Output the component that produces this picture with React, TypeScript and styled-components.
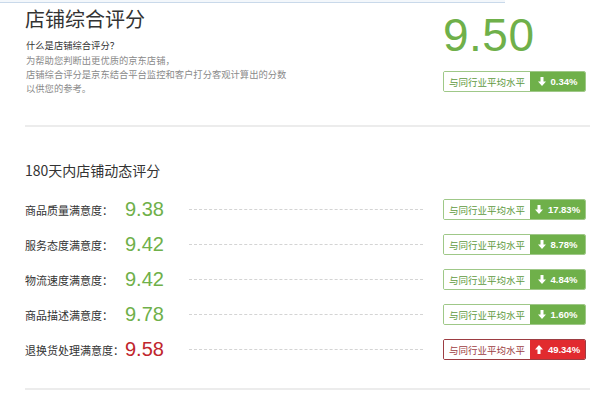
import styled, { createGlobalStyle } from 'styled-components';

const GlobalStyle = createGlobalStyle`
    html, body {
        margin: 0;
        padding: 0;
        background: #fff;
    }
    body {
        width: 600px;
        height: 396px;
        overflow: hidden;
        font-family: "Noto Sans CJK SC", "Liberation Sans", sans-serif;
        color: #333;
    }
`;

const GREEN = '#6fb04a';
const RED = '#e12b2f';

interface Row {
    label: string,
    score: string,
    diff: string,
    up?: boolean
}

const rows: Row[] = [
    { label: '商品质量满意度：', score: '9.38', diff: '17.83%' },
    { label: '服务态度满意度：', score: '9.42', diff: '8.78%' },
    { label: '物流速度满意度：', score: '9.42', diff: '4.84%' },
    { label: '商品描述满意度：', score: '9.78', diff: '1.60%' },
    { label: '退换货处理满意度：', score: '9.58', diff: '49.34%', up: true },
];

const Arrow = ({ up }: { up?: boolean }) => (
    <svg width="8" height="9" viewBox="0 0 8 9" style={{ transform: up ? 'rotate(180deg)' : undefined }}>
        <path d="M2.5 0h3v4.5H8L4 9 0 4.5h2.5z" fill="#fff" />
    </svg>
);

const Compare = ({ diff, up }: { diff: string, up?: boolean }) => (
    <Badge $up={up}>
        <BadgeLabel $up={up}>与同行业平均水平</BadgeLabel>
        <BadgeValue $up={up}>
            <Arrow up={up} />
            {diff}
        </BadgeValue>
    </Badge>
);

const App = () => {
    return (
        <>
            <GlobalStyle />
            <TopStrip />
            <Page>
                <Summary>
                    <Intro>
                        <Title>店铺综合评分</Title>
                        <Question>什么是店铺综合评分？</Question>
                        <Explain>
                            为帮助您判断出更优质的京东店铺，<br />
                            店铺综合评分是京东结合平台监控和客户打分客观计算出的分数<br />
                            以供您的参考。
                        </Explain>
                    </Intro>
                    <Total>
                        <BigScore>9.50</BigScore>
                        <Compare diff="0.34%" />
                    </Total>
                </Summary>
                <Divider />
                <Dynamic>
                    <SubTitle>180天内店铺动态评分</SubTitle>
                    <RowList>
                        {rows.map((r) => (
                            <RowItem key={r.label}>
                                <RowLabel>{r.label}</RowLabel>
                                <RowScore $up={r.up}>{r.score}</RowScore>
                                <Dash />
                                <Compare diff={r.diff} up={r.up} />
                            </RowItem>
                        ))}
                    </RowList>
                </Dynamic>
                <BottomDivider />
            </Page>
        </>
    );
}

const TopStrip = styled.div`
    height: 2px;
    width: 505px;
    border-bottom: 1px solid #c9d9ea;
    background: #f3f7fb;
`;

const Page = styled.div`
    padding: 0 10px 0 25px;
`;

const Summary = styled.div`
    display: flex;
    justify-content: space-between;
    height: 110px;
`;

const Intro = styled.div`
    padding-top: 3px;
`;

const Title = styled.h1`
    margin: 0;
    font-size: 20px;
    font-weight: normal;
    line-height: 26px;
    color: #333;
`;

const Question = styled.p`
    margin: 6px 0 1px 1px;
    font-size: 9.3px;
    line-height: 14px;
    color: #333;
`;

const Explain = styled.p`
    margin: 0 0 0 1px;
    font-size: 9.3px;
    line-height: 14px;
    color: #8a8a8a;
`;

const Total = styled.div`
    display: flex;
    flex-direction: column;
    align-items: flex-start;
    padding-top: 6px;
    width: 147px;
`;

const BigScore = styled.div`
    font-family: "Liberation Sans", sans-serif;
    font-size: 46px;
    line-height: 52px;
    color: ${GREEN};
    letter-spacing: 0.5px;
    margin-bottom: 10px;
`;

const Badge = styled.div<{ $up?: boolean }>`
    display: flex;
    height: 21px;
    border-radius: 2px;
    border: 1px solid ${(p) => (p.$up ? '#9c3d42' : '#9fc888')};
    overflow: hidden;
    box-sizing: border-box;
`;

const BadgeLabel = styled.span<{ $up?: boolean }>`
    width: 86px;
    display: flex;
    align-items: center;
    justify-content: center;
    background: #fff;
    font-size: 9.5px;
    color: ${(p) => (p.$up ? '#9c3d42' : '#5e9a3e')};
`;

const BadgeValue = styled.span<{ $up?: boolean }>`
    width: 55px;
    display: flex;
    align-items: center;
    justify-content: center;
    gap: 5px;
    background: ${(p) => (p.$up ? RED : GREEN)};
    color: #fff;
    font-family: "Liberation Sans", sans-serif;
    font-weight: bold;
    font-size: 9.5px;
`;

const Divider = styled.div`
    height: 2px;
    background: #ececec;
    margin: 12px 0 0;
`;

const Dynamic = styled.div`
    padding-top: 34px;
`;

const SubTitle = styled.h2`
    margin: 0 0 20px 0;
    font-size: 14px;
    font-weight: normal;
    line-height: 18px;
    color: #333;
`;

const RowList = styled.div`
    display: flex;
    flex-direction: column;
    gap: 14px;
`;

const RowItem = styled.div`
    display: flex;
    align-items: center;
    height: 21px;
`;

const RowLabel = styled.span`
    width: 100px;
    font-size: 11px;
    color: #333;
    white-space: nowrap;
`;

const RowScore = styled.span<{ $up?: boolean }>`
    width: 64px;
    font-family: "Liberation Sans", sans-serif;
    font-size: 20px;
    color: ${(p) => (p.$up ? '#c0262c' : GREEN)};
`;

const Dash = styled.div`
    width: 234px;
    border-top: 1px dashed #d4d4d4;
    margin-right: 20px;
`;

const BottomDivider = styled.div`
    height: 2px;
    background: #ececec;
    margin-top: 28px;
`;

export default App;
